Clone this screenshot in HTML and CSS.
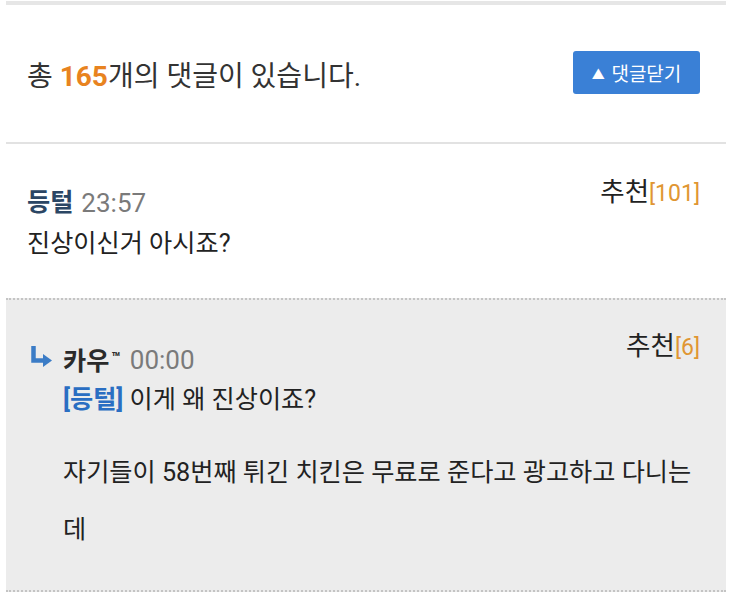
FILE: index.html
```html
<!DOCTYPE html>
<html lang="ko">
<head>
<meta charset="utf-8">
<link rel="stylesheet" href="styles.css">
</head>
<body>
<div class="board">
  <div class="topbar"></div>
  <div class="head">
    <div class="count">총 <b class="num">165</b>개의 댓글이 있습니다.</div>
    <button class="close-btn"><span class="tri">▲</span> 댓글닫기</button>
  </div>
  <div class="hline"></div>

  <div class="comment">
    <div class="c-head">
      <div class="meta"><span class="name">등털</span> <span class="time">23:57</span></div>
      <div class="rec">추천<span class="rec-num">[101]</span></div>
    </div>
    <div class="body">진상이신거 아시죠?</div>
  </div>

  <div class="reply">
    <div class="c-head">
      <div class="meta">
        <svg class="arrow" width="23" height="22" viewBox="0 0 23 22">
          <path d="M3.5 1 V15.5 H14" fill="none" stroke="#3b7cc6" stroke-width="4.5"/>
          <path d="M13 9 L22 15.5 L13 22 Z" fill="#3b7cc6"/>
        </svg>
        <span class="name">카우<sup class="tm">™</sup></span> <span class="time">00:00</span>
      </div>
      <div class="rec">추천<span class="rec-num">[6]</span></div>
    </div>
    <div class="r-body">
      <p class="p1"><span class="tag">[등털]</span> 이게 왜 진상이죠?</p>
      <p class="p2">자기들이 58번째 튀긴 치킨은 무료로 준다고 광고하고 다니는데</p>
    </div>
  </div>
</div>
</body>
</html>
```
FILE: styles.css
```css
html, body {
  margin: 0;
  padding: 0;
  background: #ffffff;
}
body {
  font-family: Roboto, "Noto Sans CJK KR", sans-serif;
  color: #222222;
}
.board {
  width: 720px;
  margin-left: 6px;
}
.topbar {
  height: 4px;
  margin-top: 1px;
  background: #e6e6e6;
}
.head {
  height: 137px;
  display: flex;
  align-items: center;
  justify-content: space-between;
  padding: 0 26px 0 21px;
}
.count {
  font-size: 28px;
  line-height: 34px;
  padding-top: 6px;
  color: #333333;
}
.num {
  color: #e8831f;
  font-weight: 700;
}
.close-btn {
  width: 127px;
  height: 43px;
  border: none;
  border-radius: 3px;
  background: #3a80d6;
  color: #ffffff;
  font-family: Roboto, "Noto Sans CJK KR", sans-serif;
  font-size: 19px;
  padding: 0;
  margin-top: -2px;
}
.tri {
  font-size: 13px;
  vertical-align: 2px;
  margin-right: 2px;
}
.hline {
  height: 2px;
  background: #e2e2e2;
}
.comment {
  padding: 32px 26px 38px 21px;
}
.c-head {
  display: flex;
  justify-content: space-between;
  align-items: flex-start;
}
.meta {
  padding-top: 11px;
  font-size: 25.2px;
  line-height: 32px;
  display: flex;
  align-items: center;
}
.name {
  font-weight: 700;
  color: #2b4664;
}
.time {
  color: #7a7a7a;
  margin-left: 8px;
  font-size: 26px;
}
.rec {
  font-size: 26.5px;
  line-height: 32px;
  color: #222222;
}
.rec-num {
  color: #e09633;
  font-size: 23px;
}
.body {
  margin-top: 9px;
  font-size: 25.2px;
  line-height: 32px;
}
.reply {
  background: #ececec;
  border-top: 2px dotted #c4c4c4;
  border-bottom: 2px dotted #c4c4c4;
  padding: 30px 26px 0 24px;
  height: 260px;
}
.reply .meta {
  padding-top: 12px;
}
.arrow {
  margin-right: 10px;
  margin-top: -8px;
}
.reply .name {
  color: #2a2a2a;
}
.reply .time {
  margin-left: 9px;
}
.tm {
  font-size: 15px;
  font-weight: 700;
  vertical-align: 7px;
  margin-left: 2px;
}
.r-body {
  padding-left: 33px;
  font-size: 25.2px;
}
.p1 {
  margin: 6px 0 0 0;
  line-height: 32px;
}
.tag {
  color: #2a6ec2;
  font-weight: 700;
}
.p2 {
  margin: 28px 0 0 0;
  line-height: 57px;
}
```
